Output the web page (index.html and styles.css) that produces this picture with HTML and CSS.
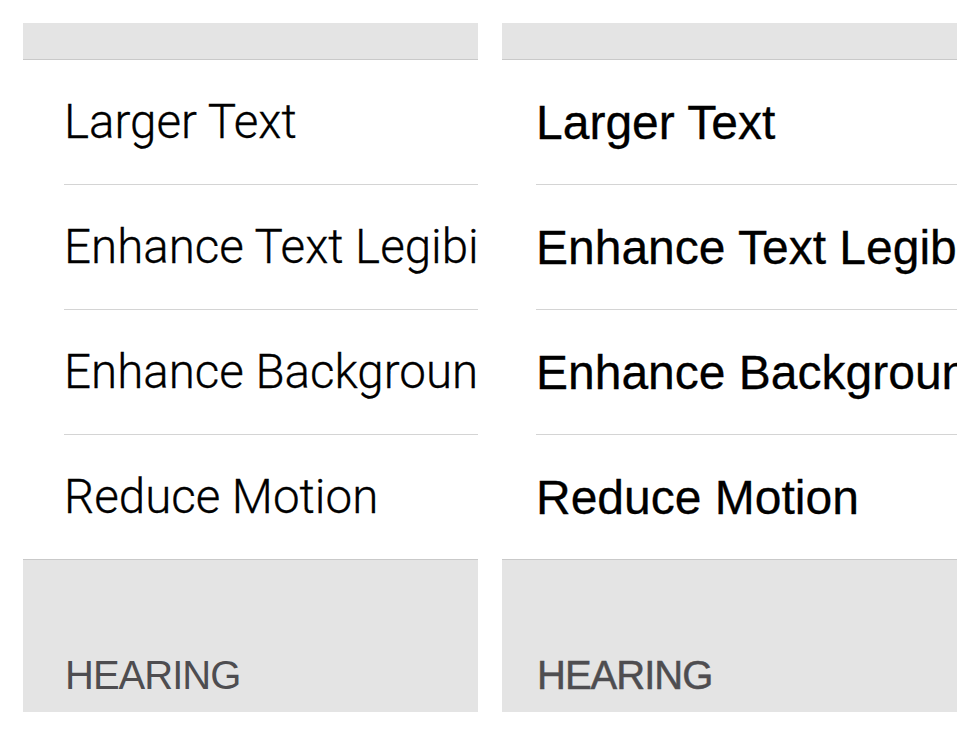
FILE: index.html
```html
<!DOCTYPE html>
<html>
  <head>
    <title>Accessibility - Text Weight</title>
    <link rel="stylesheet" href="styles.css">
  </head>
  <body>
    <div class="compare">

      <!-- normal text -->
      <div class="panel light">
        <div class="topband"></div>
        <div class="row"><div class="rowtext">Larger Text</div></div>
        <div class="row"><div class="rowtext">Enhance Text Legibility</div></div>
        <div class="row"><div class="rowtext">Enhance Background Contrast</div></div>
        <div class="row last"><div class="rowtext">Reduce Motion</div></div>
        <div class="sectionhead"><span>HEARING</span></div>
      </div>

      <!-- bold text -->
      <div class="panel bold">
        <div class="topband"></div>
        <div class="row"><div class="rowtext">Larger Text</div></div>
        <div class="row"><div class="rowtext">Enhance Text Legibility</div></div>
        <div class="row"><div class="rowtext">Enhance Background Contrast</div></div>
        <div class="row last"><div class="rowtext">Reduce Motion</div></div>
        <div class="sectionhead"><span>HEARING</span></div>
      </div>

    </div>
  </body>
</html>
```

FILE: styles.css
```css
body{
  margin: 0;
  background-color: #ffffff;
}
.compare{
  display: flex;
  gap: 24px;
  padding: 23px 0 0 23px;
}
.panel{
  width: 455px;
  overflow: hidden;
  background-color: #ffffff;
}
.topband{
  height: 36px;
  background-color: #e4e4e4;
  border-bottom: 1px solid #c9c9c9;
}
.row{
  padding-left: 41px;
}
.rowtext{
  height: 124px;
  display: flex;
  align-items: center;
  white-space: nowrap;
  overflow: hidden;
  border-bottom: 1px solid #d4d4d4;
  color: #111111;
}
.row.last .rowtext{
  border-bottom: none;
}
.sectionhead{
  height: 153px;
  box-sizing: border-box;
  background-color: #e4e4e4;
  border-top: 1px solid #c9c9c9;
  display: flex;
  align-items: flex-end;
  padding: 0 0 17px 42px;
}
.sectionhead span{
  font-family: "Liberation Sans", Arial, sans-serif;
  font-size: 40px;
  line-height: 1;
  letter-spacing: -1px;
  color: #4e4d50;
}

/* left: thin system font */
.light .rowtext{
  font-family: Roboto, "Liberation Sans", sans-serif;
  font-weight: 300;
  font-size: 47.5px;
  color: #000000;
  -webkit-text-stroke: 0.3px #000000;
}

/* right: bold text turned on */
.bold .row{
  padding-left: 34px;
}
.bold .rowtext{
  font-family: "Liberation Sans", Arial, sans-serif;
  font-size: 48px;
  color: #000000;
  -webkit-text-stroke: 0.3px #000000;
}
.bold .sectionhead{
  padding-left: 35px;
}
.bold .sectionhead span{
  -webkit-text-stroke: 0.5px #4e4d50;
}
```
